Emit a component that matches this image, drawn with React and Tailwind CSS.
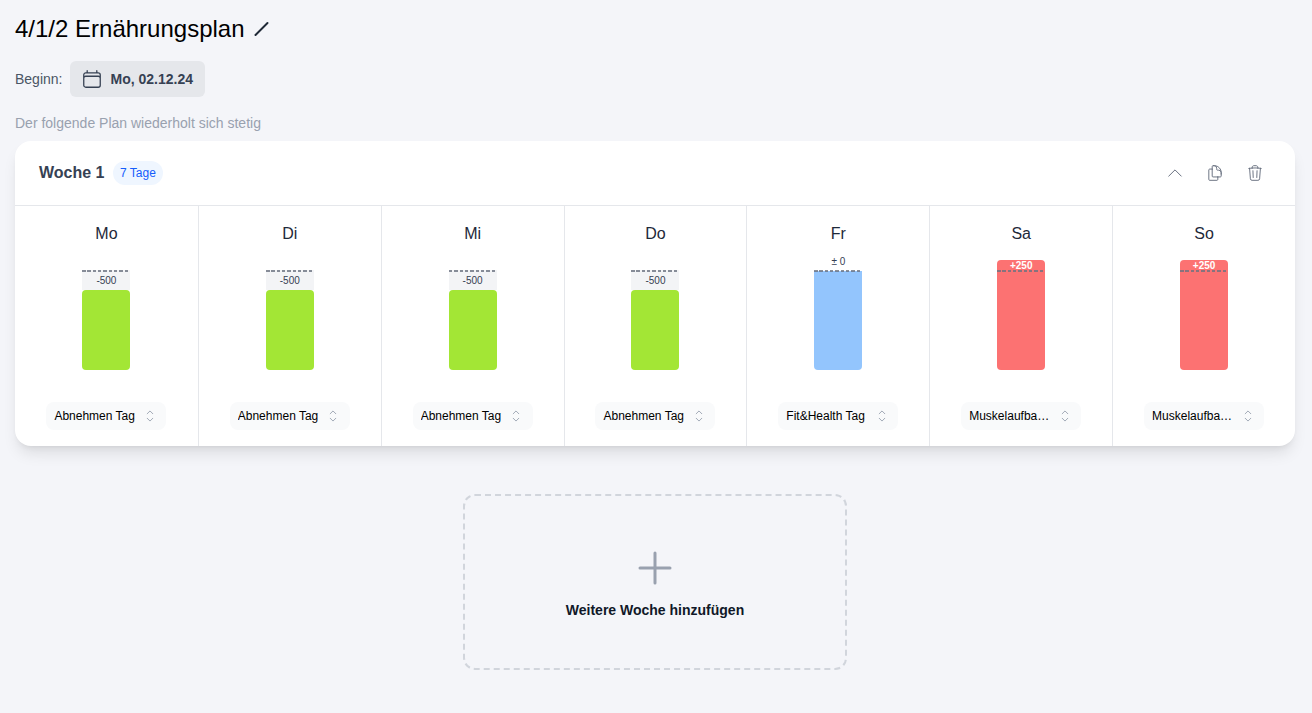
import React from "react";

const days = [
  { d: "Mo", t: "Abnehmen Tag", kind: "down" },
  { d: "Di", t: "Abnehmen Tag", kind: "down" },
  { d: "Mi", t: "Abnehmen Tag", kind: "down" },
  { d: "Do", t: "Abnehmen Tag", kind: "down" },
  { d: "Fr", t: "Fit&Health Tag", kind: "zero" },
  { d: "Sa", t: "Muskelaufbau Tag", kind: "up" },
  { d: "So", t: "Muskelaufbau Tag", kind: "up" },
];

function Icon({ size = 20, sw = 1.5, d, className = "" }) {
  return (
    <svg width={size} height={size} viewBox="0 0 24 24" fill="none" stroke="currentColor" strokeWidth={sw} strokeLinecap="round" strokeLinejoin="round" className={className}>
      <path d={d} />
    </svg>
  );
}

const CAL = "M6.75 3v2.25M17.25 3v2.25M3 18.75V7.5a2.25 2.25 0 0 1 2.25-2.25h13.5A2.25 2.25 0 0 1 21 7.5v11.25m-18 0A2.25 2.25 0 0 0 5.25 21h13.5A2.25 2.25 0 0 0 21 18.75m-18 0v-7.5A2.25 2.25 0 0 1 5.25 9h13.5A2.25 2.25 0 0 1 21 11.25v7.5";
const UP = "m4.5 15.75 7.5-7.5 7.5 7.5";
const COPY = "M15.75 17.25v3.375c0 .621-.504 1.125-1.125 1.125h-9.75a1.125 1.125 0 0 1-1.125-1.125V7.875c0-.621.504-1.125 1.125-1.125H6.75a9.06 9.06 0 0 1 1.5.124m7.5 10.376h3.375c.621 0 1.125-.504 1.125-1.125V11.25c0-4.46-3.243-8.161-7.5-8.876a9.06 9.06 0 0 0-1.5-.124H9.375c-.621 0-1.125.504-1.125 1.125v3.5m7.5 10.375H9.375a1.125 1.125 0 0 1-1.125-1.125v-9.25m12 6.625v-1.875a3.375 3.375 0 0 0-3.375-3.375h-1.5a1.125 1.125 0 0 1-1.125-1.125v-1.5a3.375 3.375 0 0 0-3.375-3.375H9.75";
const TRASH = "m14.74 9-.346 9m-4.788 0L9.26 9m9.968-3.21c.342.052.682.107 1.022.166m-1.022-.165L18.16 19.673a2.25 2.25 0 0 1-2.244 2.077H8.084a2.25 2.25 0 0 1-2.244-2.077L4.772 5.79m14.456 0a48.108 48.108 0 0 0-3.478-.397m-12 .562c.34-.059.68-.114 1.022-.165m0 0a48.11 48.11 0 0 1 3.478-.397m7.5 0v-.916c0-1.18-.91-2.164-2.09-2.201a51.964 51.964 0 0 0-3.32 0c-1.18.037-2.09 1.022-2.09 2.201v.916m7.5 0a48.667 48.667 0 0 0-7.5 0";
const UPDOWN = "M8.25 15 12 18.75 15.75 15m-7.5-6L12 5.25 15.75 9";
const PLUS = "M12 4.5v15m7.5-7.5h-15";

function Bar({ kind }) {
  return (
    <div className="relative w-12 h-[110px] flex flex-col justify-end">
      {kind === "down" && (
        <>
          <div className="h-[20px] pt-[2px] bg-gray-100 flex items-center justify-center text-[10px] leading-none text-gray-700">-500</div>
          <div className="h-20 bg-[#a3e635] rounded" />
        </>
      )}
      {kind === "zero" && (
        <>
          <div className="absolute -top-[3px] inset-x-0 h-[10px] flex items-center justify-center text-[10px] leading-none text-gray-700">± 0</div>
          <div className="h-[99px] bg-[#93c5fd] rounded-b" />
        </>
      )}
      {kind === "up" && (
        <div className="h-[110px] bg-[#fc7272] rounded flex justify-center">
          <span className="text-[10px] font-bold leading-[11px] text-white">+250</span>
        </div>
      )}
      <div className="absolute inset-x-0 top-[10px] h-[2px] opacity-80 bg-[repeating-linear-gradient(90deg,#6b7280_0_3.5px,transparent_3.5px_5.33px)]" />
    </div>
  );
}

export default function App() {
  return (
    <div className="min-h-[713px] bg-[#f4f5f9] pl-[15px] pr-[17px] pt-[14px] font-['Liberation_Sans',sans-serif]">
      <div className="flex items-center gap-[9px] h-[30px]">
        <h1 className="text-2xl leading-[30px] font-normal text-black">4/1/2 Ernährungsplan</h1>
        <svg width="16" height="16" viewBox="0 0 16 16" fill="none" stroke="#1f2937" strokeWidth="2" strokeLinecap="round">
          <path d="M1.5 14 L13.5 2" />
        </svg>
      </div>
      <div className="flex items-center gap-2 mt-[17px] h-9">
        <span className="text-sm text-gray-600">Beginn:</span>
        <button className="h-9 w-[135px] bg-[#e5e7eb] rounded-md flex items-center pl-[11px] gap-[7px] text-gray-700">
          <Icon size={22} sw={1.4} d={CAL} />
          <span className="text-sm font-bold">Mo, 02.12.24</span>
        </button>
      </div>
      <p className="text-sm text-gray-400 mt-[17px] leading-[18px]">Der folgende Plan wiederholt sich stetig</p>
      <section className="mt-[9px] bg-white rounded-2xl shadow-lg overflow-hidden">
        <header className="h-[65px] border-b border-gray-200 flex items-center pl-6 pr-[30px]">
          <h2 className="text-base font-bold text-gray-700">Woche 1</h2>
          <span className="ml-2 h-6 w-[50px] pl-[7.5px] rounded-full bg-[#eff6ff] text-xs text-blue-600 flex items-center">7 Tage</span>
          <div className="ml-auto flex items-center gap-5 text-gray-500">
            <span className="w-5 h-5 flex items-center justify-center"><Icon size={20} sw={1.2} d={UP} /></span>
            <span className="w-5 h-5 flex items-center justify-center"><Icon size={18} sw={1.3} d={COPY} /></span>
            <span className="w-5 h-5 flex items-center justify-center"><Icon size={18} sw={1.3} d={TRASH} /></span>
          </div>
        </header>
        <div className="grid grid-cols-7">
          {days.map((x, i) => (
            <div key={x.d} className={`h-60 flex flex-col items-center ${i > 0 ? "border-l border-gray-200" : ""}`}>
              <div className="mt-4 h-6 text-base leading-6 text-gray-800">{x.d}</div>
              <div className="mt-[14px]"><Bar kind={x.kind} /></div>
              <div className="mt-8 w-[120px] h-7 rounded-lg bg-gray-50 flex items-center pl-[8px] text-xs text-black">
                <span className="truncate w-[81px] shrink-0">{x.t}</span>
                <Icon size={18} sw={1.2} d={UPDOWN} className="text-gray-400 ml-[5.5px] shrink-0" />
              </div>
            </div>
          ))}
        </div>
      </section>
      <button className="mx-auto mt-12 w-96 h-44 border-2 border-dashed border-gray-300 rounded-xl flex flex-col items-center justify-center text-gray-900">
        <Icon size={48} sw={1.5} d={PLUS} className="text-gray-400" />
        <span className="text-sm font-bold mt-[8px] leading-5">Weitere Woche hinzufügen</span>
      </button>
    </div>
  );
}
